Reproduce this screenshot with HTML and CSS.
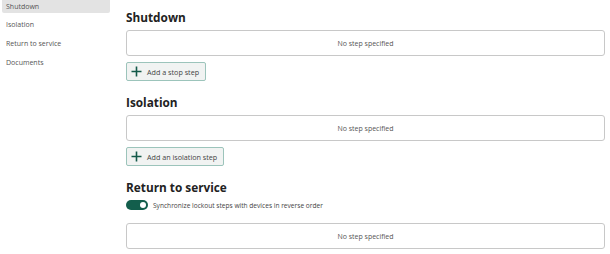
FILE: index.html
```html
<!DOCTYPE html>
<html lang="en">
<head>
    <meta charset="UTF-8">
    <title>Lockout steps</title>
    <link rel="stylesheet" href="styles.css">
</head>
<body>
    <div class="page">
        <nav class="sidebar">
            <div class="nav-item active">Shutdown</div>
            <div class="nav-item">Isolation</div>
            <div class="nav-item">Return to service</div>
            <div class="nav-item">Documents</div>
        </nav>

        <main class="content">
            <section class="section">
                <h2>Shutdown</h2>
                <div class="step-box">No step specified</div>
                <button class="add-button">
                    <svg width="11" height="11" viewBox="0 0 11 11"><path d="M5.5 0.5v10M0.5 5.5h10" stroke="#145a4a" stroke-width="1.6"/></svg>
                    Add a stop step
                </button>
            </section>

            <section class="section">
                <h2>Isolation</h2>
                <div class="step-box">No step specified</div>
                <button class="add-button">
                    <svg width="11" height="11" viewBox="0 0 11 11"><path d="M5.5 0.5v10M0.5 5.5h10" stroke="#145a4a" stroke-width="1.6"/></svg>
                    Add an isolation step
                </button>
            </section>

            <section class="section">
                <h2>Return to service</h2>
                <div class="toggle-row">
                    <span class="toggle"><span class="knob"></span></span>
                    Synchronize lockout steps with devices in reverse order
                </div>
                <div class="step-box">No step specified</div>
            </section>
        </main>
    </div>
</body>
</html>
```

FILE: styles.css
```css
body {
    font-family: 'Open Sans', 'Noto Sans', sans-serif;
    background-color: white;
    margin: 0;
    padding: 0;
    color: #333;
}
.page {
    display: flex;
}
.sidebar {
    width: 108px;
    padding-left: 2px;
    margin-top: -4px;
    flex-shrink: 0;
}
.nav-item {
    font-size: 7px;
    color: #555;
    height: 19px;
    line-height: 19px;
    padding-left: 4px;
    border-radius: 2px;
}
.nav-item.active {
    background-color: #e3e3e3;
    height: 17px;
    line-height: 21px;
    margin-bottom: 2px;
}
.content {
    flex: 1;
    margin-left: 16px;
    margin-right: 5px;
    padding-top: 9px;
}
h2 {
    font-size: 11.8px;
    font-weight: 700;
    color: #222;
    margin: 0 0 5px;
    line-height: 16px;
}
.section {
    margin-bottom: 13px;
}
.step-box {
    height: 24px;
    border: 1px solid #c8c8c8;
    border-radius: 3px;
    display: flex;
    align-items: center;
    justify-content: center;
    font-size: 7px;
    color: #555;
}
.add-button {
    display: flex;
    align-items: center;
    gap: 5px;
    margin-top: 6px;
    height: 19px;
    padding: 0 6px 0 4px;
    background-color: #f1f3f2;
    border: 1px solid #9cc4bb;
    border-radius: 2px;
    font-family: inherit;
    font-size: 7.2px;
    color: #444;
}
.toggle-row {
    display: flex;
    align-items: center;
    gap: 5px;
    font-size: 6.6px;
    color: #444;
    margin-top: 2px;
    margin-bottom: 13px;
}
.toggle {
    width: 22px;
    height: 10px;
    border-radius: 5px;
    background-color: #135e4c;
    display: flex;
    align-items: center;
    justify-content: flex-end;
    padding-right: 2px;
    box-sizing: border-box;
}
.knob {
    width: 6px;
    height: 6px;
    border-radius: 50%;
    background-color: white;
}
```
